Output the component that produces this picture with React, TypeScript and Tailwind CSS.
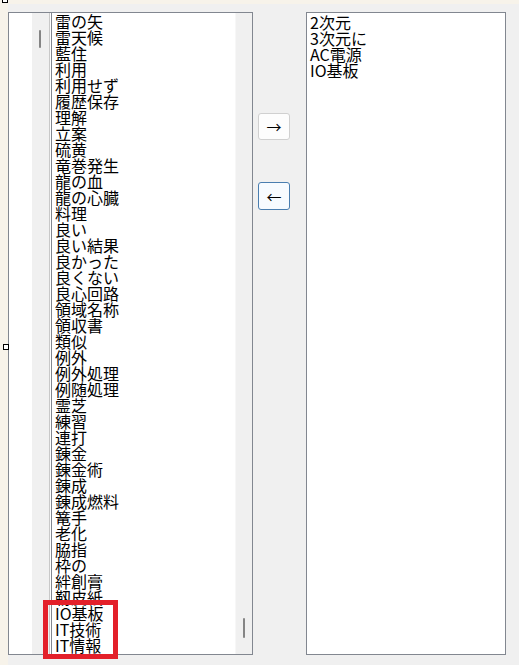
const leftItems = [
  "雷の矢",
  "雷天候",
  "藍住",
  "利用",
  "利用せず",
  "履歴保存",
  "理解",
  "立案",
  "硫黄",
  "竜巻発生",
  "龍の血",
  "龍の心臓",
  "料理",
  "良い",
  "良い結果",
  "良かった",
  "良くない",
  "良心回路",
  "領域名称",
  "領収書",
  "類似",
  "例外",
  "例外処理",
  "例随処理",
  "霊芝",
  "練習",
  "連打",
  "錬金",
  "錬金術",
  "錬成",
  "錬成燃料",
  "篭手",
  "老化",
  "脇指",
  "枠の",
  "絆創膏",
  "靱皮紙",
  "IO基板",
  "IT技術",
  "IT情報",
];

const rightItems = ["2次元", "3次元に", "AC電源", "IO基板"];

const font = "font-['Noto_Sans_CJK_JP','Noto_Sans',sans-serif]";

function ListLines({ items }: { items: string[] }) {
  return (
    <ul className={`${font} text-[16px] leading-[16px] text-black`}>
      {items.map((item, i) => (
        <li key={i} className="h-[16px] whitespace-nowrap">
          {item}
        </li>
      ))}
    </ul>
  );
}

export default function App() {
  return (
    <div className="relative w-[519px] h-[665px] overflow-hidden flex bg-[#f7f3ea]">
      {/* resize handles */}
      <div className="absolute left-[2px] top-[-3px] w-[6px] h-[6px] border border-black bg-white" />
      <div className="absolute left-[3px] top-[344px] w-[6px] h-[6px] border border-black bg-white" />

      <div className="w-[8px] shrink-0" />

      <div className="flex-1 flex flex-col">
        <div className="h-[4px] shrink-0" />
        <div className="flex-1 bg-[#f0f0f0] pt-[8px]">
          <div className="flex h-[643px]">
            {/* left list box */}
            <div className="w-[245px] shrink-0 flex border border-[#828790] bg-white">
              <div className="w-[23px] bg-white" />
              <div className="w-[17px] bg-[#f0f0f0] pt-[17px] flex justify-center">
                <div className="w-[2px] h-[18px] ml-[-1px] rounded-full bg-[#858585]" />
              </div>
              <div className="w-[1px] bg-[#c8c8c8]" />
              <div className="w-[1px] bg-white" />
              <div className="w-[1px] bg-[#828790]" />
              <div className="flex-1 pl-[3px] overflow-hidden">
                <ListLines items={leftItems} />
              </div>
              <div className="w-[17px] bg-[#f0f0f0] border-l border-[#f7f7f7] flex flex-col justify-end items-center pb-[16px]">
                <div className="w-[2px] h-[20px] rounded-full bg-[#858585]" />
              </div>
            </div>

            {/* move buttons */}
            <div className="w-[53px] shrink-0 flex flex-col pl-[5px] pt-[101px] gap-[42px]">
              <button className="w-[32px] h-[27px] rounded-[3px] border border-[#d0d0d0] bg-[#fdfdfd] flex items-center justify-center text-[15px] leading-none text-black font-['Noto_Sans_CJK_JP',sans-serif]">
                →
              </button>
              <button className="w-[32px] h-[28px] rounded-[3px] border border-[#4a7eb0] bg-[#f7fbff] flex items-center justify-center text-[15px] leading-none text-black font-['Noto_Sans_CJK_JP',sans-serif]">
                ←
              </button>
            </div>

            {/* right list box */}
            <div className="w-[200px] shrink-0 border border-[#828790] bg-white pl-[3px] pt-[1px]">
              <ListLines items={rightItems} />
            </div>
          </div>
        </div>
      </div>

      {/* annotation box */}
      <div className="absolute left-[43px] top-[600px] w-[75px] h-[59px] border-[5px] border-[#e3202a]" />
    </div>
  );
}
